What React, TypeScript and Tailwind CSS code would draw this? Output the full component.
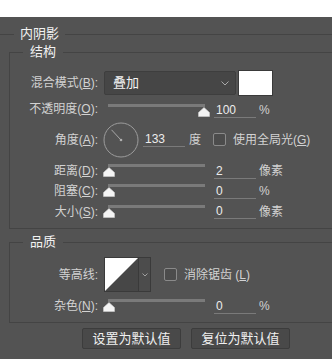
import React from 'react';

const LABEL = 'w-[90px] shrink-0 text-right pr-[2px] text-[#d2d2d2]';

const Slider: React.FC<{ value: number; className?: string }> = ({ value, className = '' }) => (
  <div className={`relative w-[106px] h-[14px] shrink-0 ml-[4px] ${className}`}>
    <div className="absolute left-[4px] top-0 w-[97px] h-[3px] bg-[#7a7a7a]" />
    <svg
      className="absolute top-[3px]"
      style={{ left: -1 + value * 0.95 }}
      width="12"
      height="10"
      viewBox="0 0 12 10"
    >
      <path d="M6 0.5 L11.5 5.5 L11.5 9.5 L0.5 9.5 L0.5 5.5 Z" fill="#f4f4f4" stroke="#cfcfcf" strokeWidth="0.6" />
    </svg>
  </div>
);

const Field: React.FC<{ value: string; className?: string }> = ({ value, className = '' }) => (
  <div className={`w-[42px] h-[15px] shrink-0 border-b border-[#7a7a7a] pl-[2px] leading-[14px] text-[#ececec] ${className}`}>
    {value}
  </div>
);

const Check: React.FC<{ className?: string }> = ({ className = '' }) => (
  <div className={`w-[13px] h-[13px] shrink-0 rounded-[2px] border border-[#8a8a8a] bg-[#4c4c4c] ${className}`} />
);

export default function App() {
  return (
    <div className="w-[332px] h-[359px] overflow-hidden bg-[#535353] text-[12px] leading-4 text-[#d2d2d2] font-['Liberation_Sans','Noto_Sans_CJK_SC',sans-serif]">
      <div className="h-[17px] bg-white" />

      <fieldset className="mt-[9px] border-t border-[#444444]">
        <legend className="ml-[14px] px-[6px] leading-4 text-[13px] text-[#f2f2f2]">内阴影</legend>

        {/* 结构 */}
        <fieldset className="ml-[9px] mt-[2px] border-y border-l border-[#444444] pb-[6px]">
          <legend className="ml-[13px] px-[7px] leading-4 text-[13px] text-[#f2f2f2]">结构</legend>

          <div className="mt-[10px] flex h-[26px] items-center">
            <div className={LABEL}>
              混合模式(<u>B</u>):
            </div>
            <div className="ml-[4px] flex h-[24px] w-[132px] items-center justify-between rounded-[2px] border border-[#3e3e3e] bg-[#464646] pl-[8px] pr-[6px] text-[13px] text-[#f4f4f4]">
              <span>叠加</span>
              <svg width="8" height="5" viewBox="0 0 8 5">
                <path d="M0.5 0.5 L4 4 L7.5 0.5" fill="none" stroke="#a8a8a8" strokeWidth="1" />
              </svg>
            </div>
            <div className="ml-[2px] h-[26px] w-[35px] border border-[#3a3a3a] bg-white" />
          </div>

          <div className="flex h-[26px] items-center">
            <div className={LABEL}>
              不透明度(<u>O</u>):
            </div>
            <Slider value={100} className="mt-[3px]" />
            <Field value="100" className="ml-[4px] mt-[3px]" />
            <span className="ml-[3px] mt-[2px]">%</span>
          </div>

          <div className="flex h-[35px] items-center">
            <div className={LABEL}>
              角度(<u>A</u>):
            </div>
            <svg className="ml-[3px] shrink-0" width="36" height="36" viewBox="0 0 36 36">
              <circle cx="18" cy="18" r="17" fill="none" stroke="#9c9c9c" strokeWidth="1" />
              <line x1="18" y1="18" x2="8.5" y2="7.8" stroke="#a8a8a8" strokeWidth="1" />
              <circle cx="18" cy="18" r="1.3" fill="#b0b0b0" />
            </svg>
            <Field value="133" className="ml-[4px]" />
            <span className="ml-[4px]">度</span>
            <Check className="ml-[12px]" />
            <span className="ml-[7px] whitespace-nowrap">
              使用全局光(<u>G</u>)
            </span>
          </div>

          <div className="mt-[4px] flex h-[20px] items-center">
            <div className={LABEL}>
              距离(<u>D</u>):
            </div>
            <Slider value={0} />
            <Field value="2" className="ml-[4px]" />
            <span className="ml-[3px]">像素</span>
          </div>

          <div className="flex h-[20px] items-center">
            <div className={LABEL}>
              阻塞(<u>C</u>):
            </div>
            <Slider value={0} />
            <Field value="0" className="ml-[4px]" />
            <span className="ml-[3px]">%</span>
          </div>

          <div className="flex h-[21px] items-center">
            <div className={LABEL}>
              大小(<u>S</u>):
            </div>
            <Slider value={0} />
            <Field value="0" className="ml-[4px]" />
            <span className="ml-[3px]">像素</span>
          </div>
        </fieldset>

        {/* 品质 */}
        <fieldset className="ml-[9px] mt-[5px] border-y border-l border-[#444444] pb-[6px]">
          <legend className="ml-[13px] px-[7px] leading-4 text-[13px] text-[#f2f2f2]">品质</legend>

          <div className="mt-[7px] flex h-[35px] items-center">
            <div className={LABEL}>等高线:</div>
            <svg className="ml-[4px] shrink-0" width="35" height="35" viewBox="0 0 35 35">
              <rect x="0" y="0" width="35" height="35" fill="#474747" />
              <polygon points="1,34 34,1 1,1" fill="#ffffff" />
              <rect x="0.5" y="0.5" width="34" height="34" fill="none" stroke="#3a3a3a" />
            </svg>
            <div className="flex h-[35px] w-[12px] shrink-0 items-center justify-center border-y border-r border-[#3a3a3a] bg-[#4c4c4c]">
              <svg width="6" height="4" viewBox="0 0 6 4">
                <path d="M0.5 0.5 L3 3 L5.5 0.5" fill="none" stroke="#a0a0a0" strokeWidth="1" />
              </svg>
            </div>
            <Check className="ml-[13px]" />
            <span className="ml-[7px] whitespace-nowrap">
              消除锯齿 (<u>L</u>)
            </span>
          </div>

          <div className="mt-[4px] flex h-[20px] items-center">
            <div className={LABEL}>
              杂色(<u>N</u>):
            </div>
            <Slider value={0} />
            <Field value="0" className="ml-[4px]" />
            <span className="ml-[3px]">%</span>
          </div>
        </fieldset>
      </fieldset>

      <div className="mt-[5px] flex gap-[10px] pl-[82px]">
        <button className="h-[21px] w-[99px] rounded-[2px] border border-[#3c3c3c] bg-[#494949] text-[13px] leading-4 text-[#f0f0f0]">
          设置为默认值
        </button>
        <button className="h-[21px] w-[99px] rounded-[2px] border border-[#3c3c3c] bg-[#494949] text-[13px] leading-4 text-[#f0f0f0]">
          复位为默认值
        </button>
      </div>
    </div>
  );
}
